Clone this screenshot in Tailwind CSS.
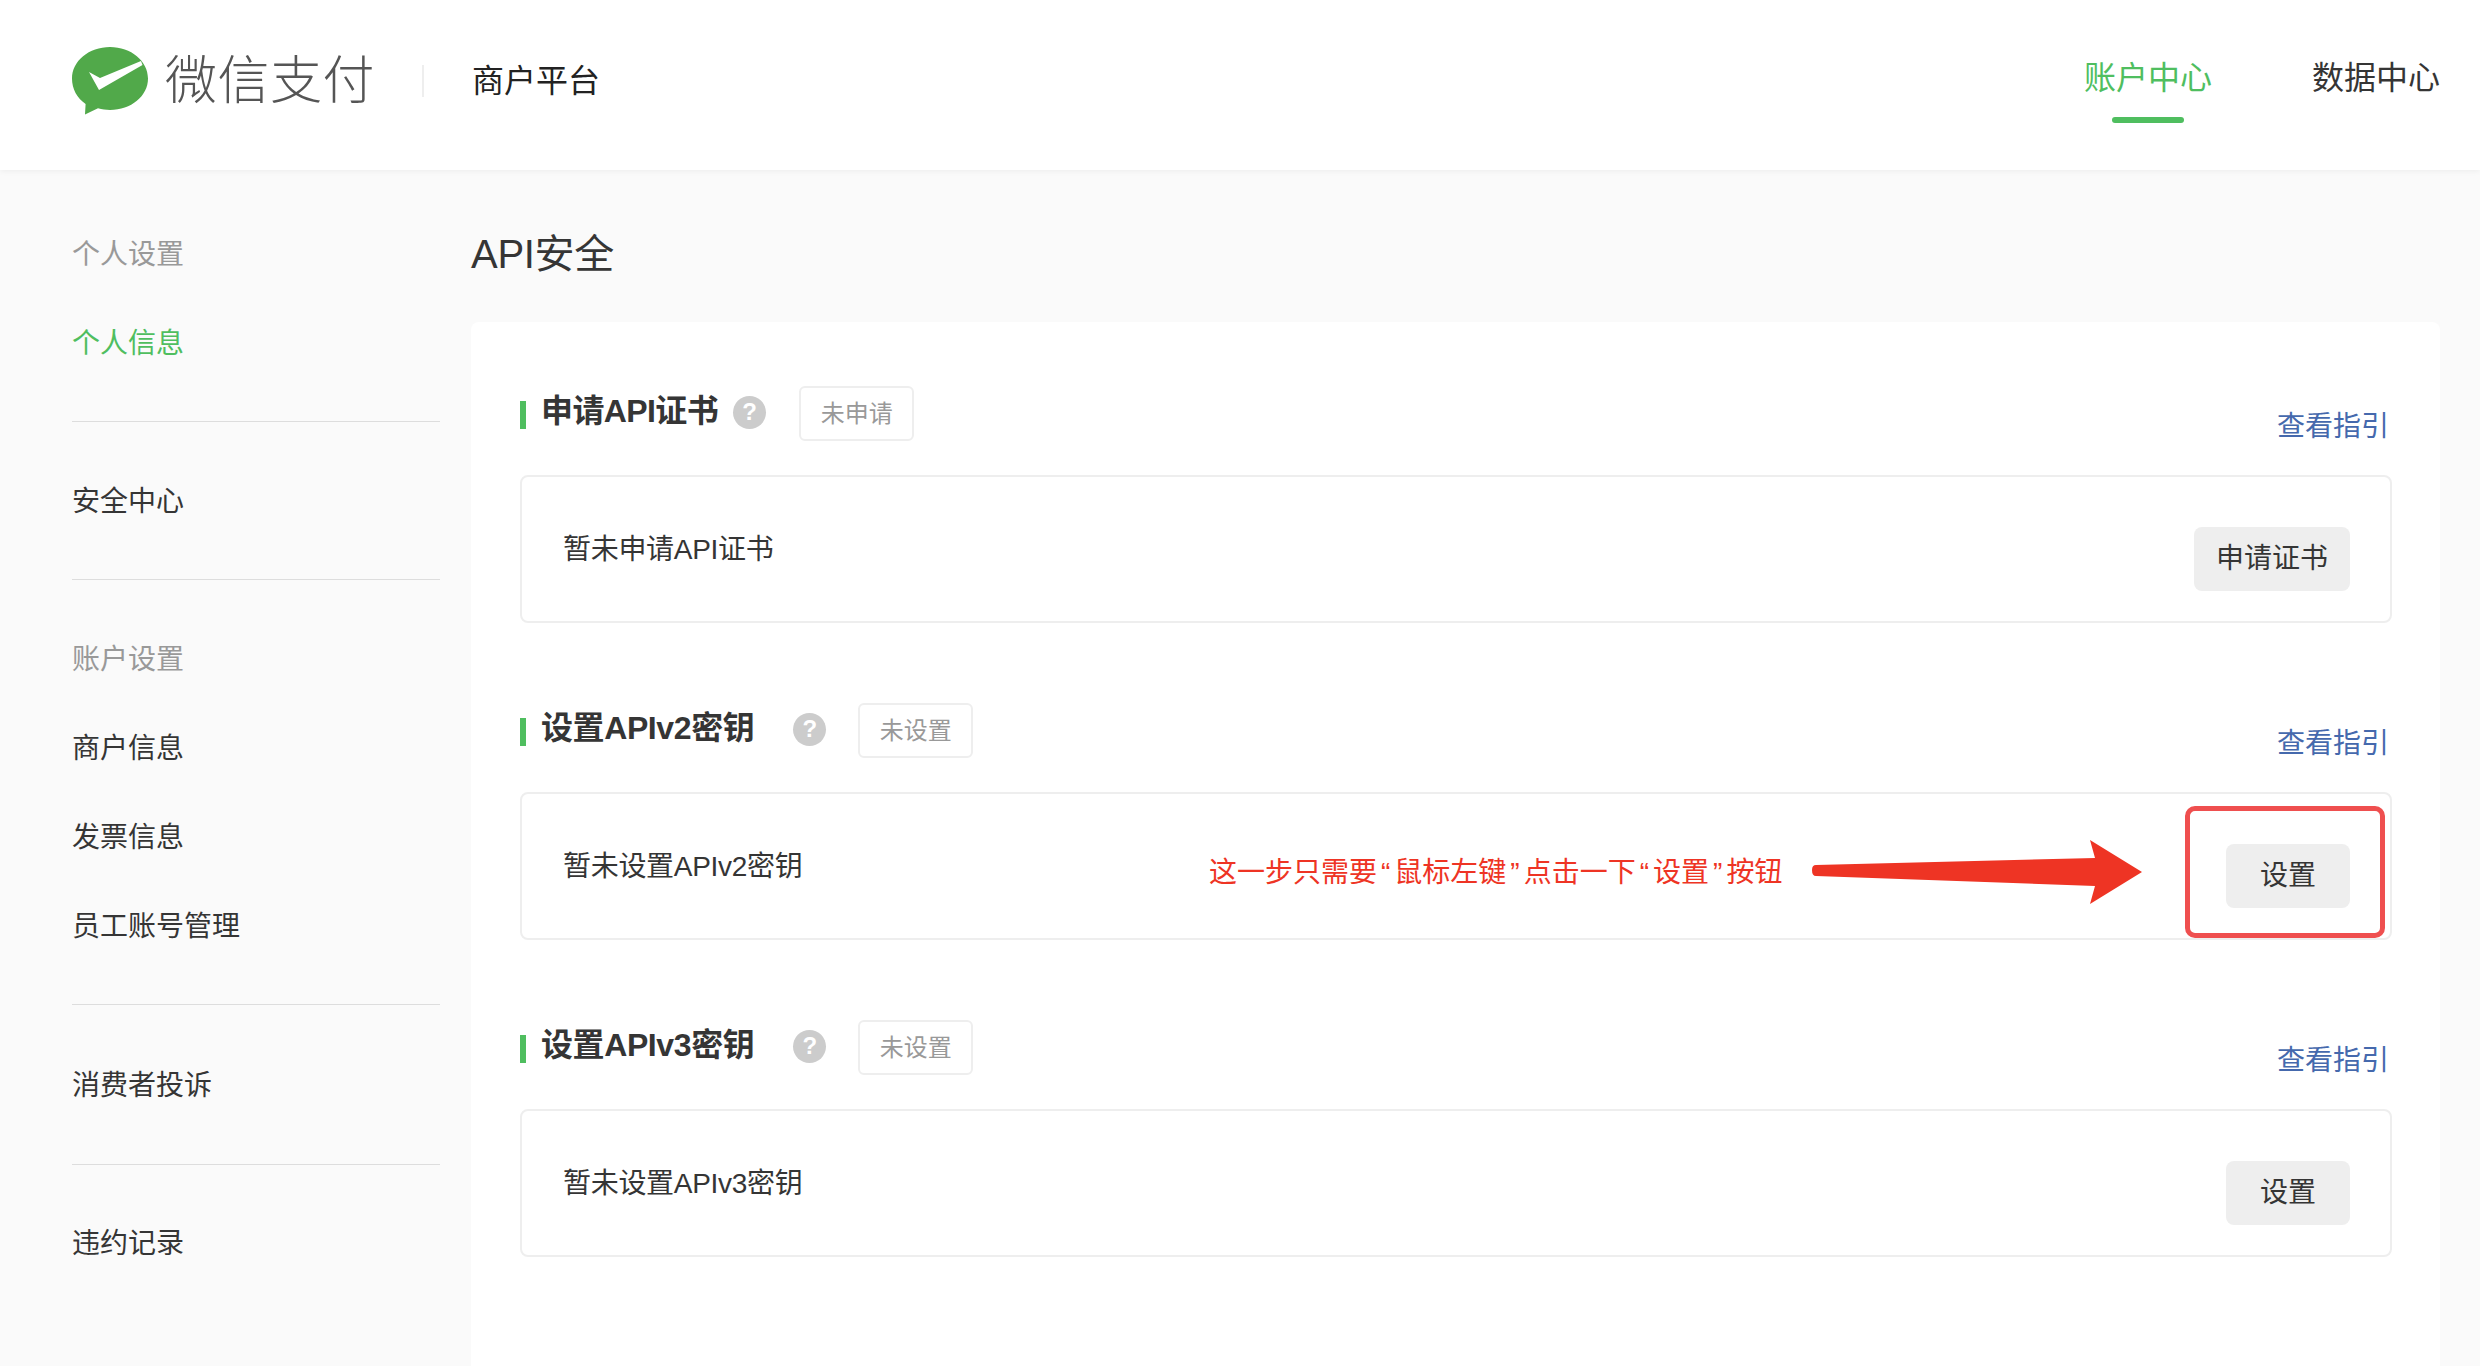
<!DOCTYPE html>
<html lang="zh-CN">

<head>
  <meta charset="UTF-8">
  <title>API安全</title>
  <script src="https://cdn.jsdelivr.net/npm/@tailwindcss/browser@4"></script>
</head>

<body class="bg-[#fafafa] font-['Liberation_Sans','Noto_Sans_CJK_SC',sans-serif] text-[#353535]">
  <div class="h-[1366px] overflow-hidden">

    <!-- Header -->
    <header class="relative h-[170px] bg-white shadow-[0_1px_6px_rgba(0,0,0,0.06)] flex justify-between pl-[72px] pr-[40px]">
      <div class="flex items-center pb-[8px]">
        <svg class="w-[76px] h-[68px]" viewBox="72 48 76 68">
          <path fill="#51a94a" d="M110 48c21 0 38 14 38 31.500s-17 31.500-38 31.500c-4 0-8-.5-12-1.700L85 115.500l.6-10.500C77 99 72 90 72 79.500c0-17.500 17-31.500 38-31.500z" />
          <path fill="#fff" d="M89 73l11 6 41-17 1.500 4-43.500 25z" />
        </svg>
        <span class="ml-[17px] text-[52px] leading-[68px] font-light tracking-[0.5px] text-[#555]">微信支付</span>
        <span class="ml-[47px] w-[2px] h-[32px] bg-[#eee]"></span>
        <span class="ml-[48px] text-[32px] leading-[48px] text-[#222]">商户平台</span>
      </div>
      <nav class="flex gap-[100px] text-[32px] leading-[48px]">
        <a class="flex flex-col items-center pt-[54px] text-[#4fbe5f]">
          账户中心
          <span class="mt-[15px] w-[72px] h-[6px] rounded-full bg-[#4fbe5f]"></span>
        </a>
        <a class="pt-[54px]">数据中心</a>
      </nav>
    </header>

    <div class="flex">
      <!-- Sidebar -->
      <aside class="w-[471px] shrink-0 pt-[40px] pl-[72px] pr-[31px] text-[28px] leading-[89px]">
        <div class="text-[#999]">个人设置</div>
        <div class="text-[#4fbe5f]">个人信息</div>
        <div class="h-[1px] bg-[#ddd] mt-[33px] mb-[35px]"></div>
        <div>安全中心</div>
        <div class="h-[1px] bg-[#ddd] mt-[33px] mb-[35px]"></div>
        <div class="text-[#999]">账户设置</div>
        <div>商户信息</div>
        <div>发票信息</div>
        <div>员工账号管理</div>
        <div class="h-[1px] bg-[#ddd] mt-[33px] mb-[36px]"></div>
        <div>消费者投诉</div>
        <div class="h-[1px] bg-[#ddd] mt-[34px] mb-[34px]"></div>
        <div>违约记录</div>
      </aside>

      <!-- Main -->
      <main class="flex-1 pr-[40px]">
        <h1 class="h-[152px] pt-[54px] text-[40px] leading-[60px] tracking-[-0.3px]">API安全</h1>
        <div class="h-[1100px] bg-white rounded-lg pt-[64px] pl-[49px] pr-[48px]">

          <!-- 申请API证书 -->
          <section class="mb-[80px]">
            <div class="h-[89px] flex justify-between items-start">
              <div class="flex items-center h-[55px]">
                <span class="w-[6px] h-[28px] bg-[#4fbe5f] mb-[-3px]"></span>
                <h2 class="ml-[15px] mb-[5px] text-[32px] leading-[48px] font-semibold tracking-[-0.6px]">申请API证书</h2>
                <span class="ml-[15px] mb-[3px] w-[33px] h-[33px] rounded-full bg-[#ccc] flex items-center justify-center text-[24px] font-bold text-white">?</span>
                <span class="ml-[33px] pt-[1px] w-[115px] h-[55px] border-2 border-[#eee] rounded-md flex items-center justify-center text-[24px] text-[#999]">未申请</span>
              </div>
              <a class="mt-[20px] mr-[3px] text-[28px] leading-[42px] text-[#4569ad]">查看指引</a>
            </div>
            <div class="h-[148px] border-2 border-[#eee] rounded-lg flex justify-between items-start pl-[41px] pr-[40px]">
              <p class="mt-[52px] text-[28px] leading-[42px] tracking-[-0.3px]">暂未申请API证书</p>
              <button class="mt-[50px] w-[156px] h-[64px] rounded-lg bg-[#eee] text-[28px]">申请证书</button>
            </div>
          </section>

          <!-- 设置APIv2密钥 -->
          <section class="mb-[80px]">
            <div class="h-[89px] flex justify-between items-start">
              <div class="flex items-center h-[55px]">
                <span class="w-[6px] h-[28px] bg-[#4fbe5f] mb-[-3px]"></span>
                <h2 class="ml-[15px] mb-[5px] text-[32px] leading-[48px] font-semibold tracking-[-0.4px]">设置APIv2密钥</h2>
                <span class="ml-[39px] mb-[3px] w-[33px] h-[33px] rounded-full bg-[#ccc] flex items-center justify-center text-[24px] font-bold text-white">?</span>
                <span class="ml-[32px] pt-[1px] w-[115px] h-[55px] border-2 border-[#eee] rounded-md flex items-center justify-center text-[24px] text-[#999]">未设置</span>
              </div>
              <a class="mt-[20px] mr-[3px] text-[28px] leading-[42px] text-[#4569ad]">查看指引</a>
            </div>
            <div class="relative h-[148px] border-2 border-[#eee] rounded-lg flex justify-between items-start pl-[41px] pr-[40px]">
              <p class="mt-[52px] text-[28px] leading-[42px] tracking-[-0.3px]">暂未设置APIv2密钥</p>
              <button class="mt-[50px] w-[124px] h-[64px] rounded-lg bg-[#eee] text-[28px]">设置</button>

              <!-- Annotation over the row -->
              <span class="absolute left-[687px] top-[58px] text-[28px] leading-[42px] text-[#ee3424] whitespace-nowrap">这一步只需要<span class="px-[4px]">“</span>鼠标左键<span class="px-[4px]">”</span>点击一下<span class="px-[4px]">“</span>设置<span class="px-[4px]">”</span>按钮</span>
              <svg class="absolute left-[1290px] top-[46px] w-[330px] h-[64px]" viewBox="1812 840 330 64">
                <path fill="#ee3424" d="M1816 865L2095 858L2090 840L2142 872L2090 904L2095 886L1816 876Q1812 876 1812 870Q1812 865 1816 865z" />
              </svg>
              <div class="absolute left-[1663px] top-[12px] w-[200px] h-[132px] border-[5px] border-[#ef4f4f] rounded-[10px]"></div>
            </div>
          </section>

          <!-- 设置APIv3密钥 -->
          <section>
            <div class="h-[89px] flex justify-between items-start">
              <div class="flex items-center h-[55px]">
                <span class="w-[6px] h-[28px] bg-[#4fbe5f] mb-[-3px]"></span>
                <h2 class="ml-[15px] mb-[5px] text-[32px] leading-[48px] font-semibold tracking-[-0.4px]">设置APIv3密钥</h2>
                <span class="ml-[39px] mb-[3px] w-[33px] h-[33px] rounded-full bg-[#ccc] flex items-center justify-center text-[24px] font-bold text-white">?</span>
                <span class="ml-[32px] pt-[1px] w-[115px] h-[55px] border-2 border-[#eee] rounded-md flex items-center justify-center text-[24px] text-[#999]">未设置</span>
              </div>
              <a class="mt-[20px] mr-[3px] text-[28px] leading-[42px] text-[#4569ad]">查看指引</a>
            </div>
            <div class="h-[148px] border-2 border-[#eee] rounded-lg flex justify-between items-start pl-[41px] pr-[40px]">
              <p class="mt-[52px] text-[28px] leading-[42px] tracking-[-0.3px]">暂未设置APIv3密钥</p>
              <button class="mt-[50px] w-[124px] h-[64px] rounded-lg bg-[#eee] text-[28px]">设置</button>
            </div>
          </section>

        </div>
      </main>
    </div>
  </div>
</body>

</html>
